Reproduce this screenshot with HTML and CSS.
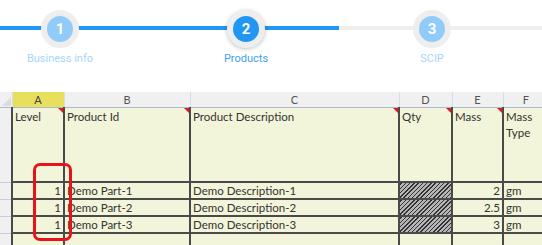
FILE: index.html
```html
<!DOCTYPE html>
<html lang="en">
<head>
    <meta charset="UTF-8">
    <meta name="viewport" content="width=device-width, initial-scale=1.0">
    <title>Products</title>
    <link rel="stylesheet" href="styles.css">
</head>
<body>

    <div class="track">
        <div class="stepper">
            <div class="step">
                <span class="dot">1</span>
                <span class="label">Business info</span>
            </div>
            <div class="step active">
                <span class="dot">2</span>
                <span class="label">Products</span>
            </div>
            <div class="step">
                <span class="dot">3</span>
                <span class="label">SCIP</span>
            </div>
        </div>
    </div>

    <div class="sheet">
        <table class="grid">
            <colgroup>
                <col class="w-head">
                <col class="w-a">
                <col class="w-b">
                <col class="w-c">
                <col class="w-d">
                <col class="w-e">
                <col class="w-f">
            </colgroup>
            <tr class="cols">
                <th class="corner"><span class="corner-mark"></span></th>
                <th class="sel">A</th>
                <th>B</th>
                <th>C</th>
                <th>D</th>
                <th>E</th>
                <th>F</th>
            </tr>
            <tr class="titles">
                <td class="rowhead"></td>
                <td class="note">Level</td>
                <td class="note">Product Id</td>
                <td class="note">Product Description</td>
                <td class="note">Qty</td>
                <td class="note">Mass</td>
                <td class="wrap">Mass Type</td>
            </tr>
            <tr>
                <td class="rowhead"></td>
                <td class="num">1</td>
                <td>Demo Part-1</td>
                <td>Demo Description-1</td>
                <td class="hatch"></td>
                <td class="num">2</td>
                <td>gm</td>
            </tr>
            <tr>
                <td class="rowhead"></td>
                <td class="num">1</td>
                <td>Demo Part-2</td>
                <td>Demo Description-2</td>
                <td class="hatch"></td>
                <td class="num">2.5</td>
                <td>gm</td>
            </tr>
            <tr>
                <td class="rowhead"></td>
                <td class="num">1</td>
                <td>Demo Part-3</td>
                <td>Demo Description-3</td>
                <td class="hatch"></td>
                <td class="num">3</td>
                <td>gm</td>
            </tr>
            <tr class="last">
                <td class="rowhead"></td>
                <td></td>
                <td></td>
                <td></td>
                <td></td>
                <td></td>
                <td></td>
            </tr>
        </table>

        <!-- marca roja sobre la columna Level -->
        <div class="callout"></div>
    </div>

</body>
</html>
```

FILE: styles.css
```css
/* General */
body {
    margin: 0;
    background-color: #ffffff;
    overflow: hidden;
    font-family: 'Roboto', 'Liberation Sans', sans-serif;
}

/* Stepper */
.track {
    height: 92px;
    background:
        linear-gradient(#2196f3, #2196f3) 0 26px / 339px 4px no-repeat,
        linear-gradient(#eeeeee, #eeeeee) 0 26px / 100% 4px no-repeat;
}

.stepper {
    display: grid;
    grid-template-columns: 186px 186px 186px;
    margin-left: -33px;
    padding-top: 10px;
}

.step {
    display: flex;
    flex-direction: column;
    align-items: center;
}

.dot {
    width: 26px;
    height: 26px;
    border: 6px solid #eeeeee;
    border-radius: 50%;
    background-color: #90cbf9;
    color: #ffffff;
    font-size: 15px;
    font-weight: bold;
    display: flex;
    align-items: center;
    justify-content: center;
}

.label {
    margin-top: 4px;
    font-size: 11px;
    color: #a6d6fb;
}

.step.active .dot {
    background-color: #2196f3;
    box-shadow: 0 1px 4px rgba(0, 0, 0, 0.25);
}

.step.active .label {
    color: #42a0ee;
}

/* Hoja de calculo */
.sheet {
    position: relative;
}

.grid {
    border-collapse: collapse;
    table-layout: fixed;
    width: 548px;
    font-family: 'Lato', 'Liberation Sans', sans-serif;
    font-size: 11.5px;
    color: #333333;
}

.w-head { width: 12px; }
.w-a { width: 52px; }
.w-b { width: 126px; }
.w-c { width: 209px; }
.w-d { width: 53px; }
.w-e { width: 51px; }
.w-f { width: 45px; }

.cols th {
    height: 15px;
    padding: 0;
    font-weight: normal;
    font-size: 11px;
    color: #555555;
    background-color: #f0f0f0;
    border-left: 1px solid #d5dde6;
    border-bottom: 1px solid #a9bccd;
}

.cols th.sel {
    background-color: #e8e05c;
    color: #444444;
}

.cols th.corner {
    position: relative;
    border-left: none;
}

.corner-mark {
    position: absolute;
    right: 1px;
    bottom: 1px;
    border-left: 9px solid transparent;
    border-bottom: 9px solid #dcdcdc;
}

.grid td {
    height: 15px;
    padding: 0 2px;
    line-height: 15px;
    background-color: #f2f5d9;
    border: 2px solid #4a4a4a;
    white-space: nowrap;
    overflow: hidden;
}

.grid td.rowhead {
    background-color: #f0f0f0;
    border: none;
    border-bottom: 1px solid #c3d1de;
    border-right: 1px solid #a9bccd;
}

.titles td {
    height: 72px;
    vertical-align: top;
    padding-top: 1px;
    line-height: 16px;
    border-top: none;
}

.grid td.wrap {
    white-space: normal;
}

.titles td.note {
    position: relative;
}

.titles td.note::after {
    content: "";
    position: absolute;
    top: 0;
    right: 0;
    border-left: 5px solid transparent;
    border-top: 5px solid #e0191e;
}

.grid td.num {
    text-align: right;
}

.grid td.hatch {
    background: repeating-linear-gradient(-45deg, #333333 0 1px, #b5b5b5 1px 3px);
}

.last td {
    border-bottom: none;
}

/* Marca roja */
.callout {
    position: absolute;
    left: 33px;
    top: 71px;
    width: 33px;
    height: 72px;
    border: 3px solid #e8121a;
    border-radius: 7px;
}
```
